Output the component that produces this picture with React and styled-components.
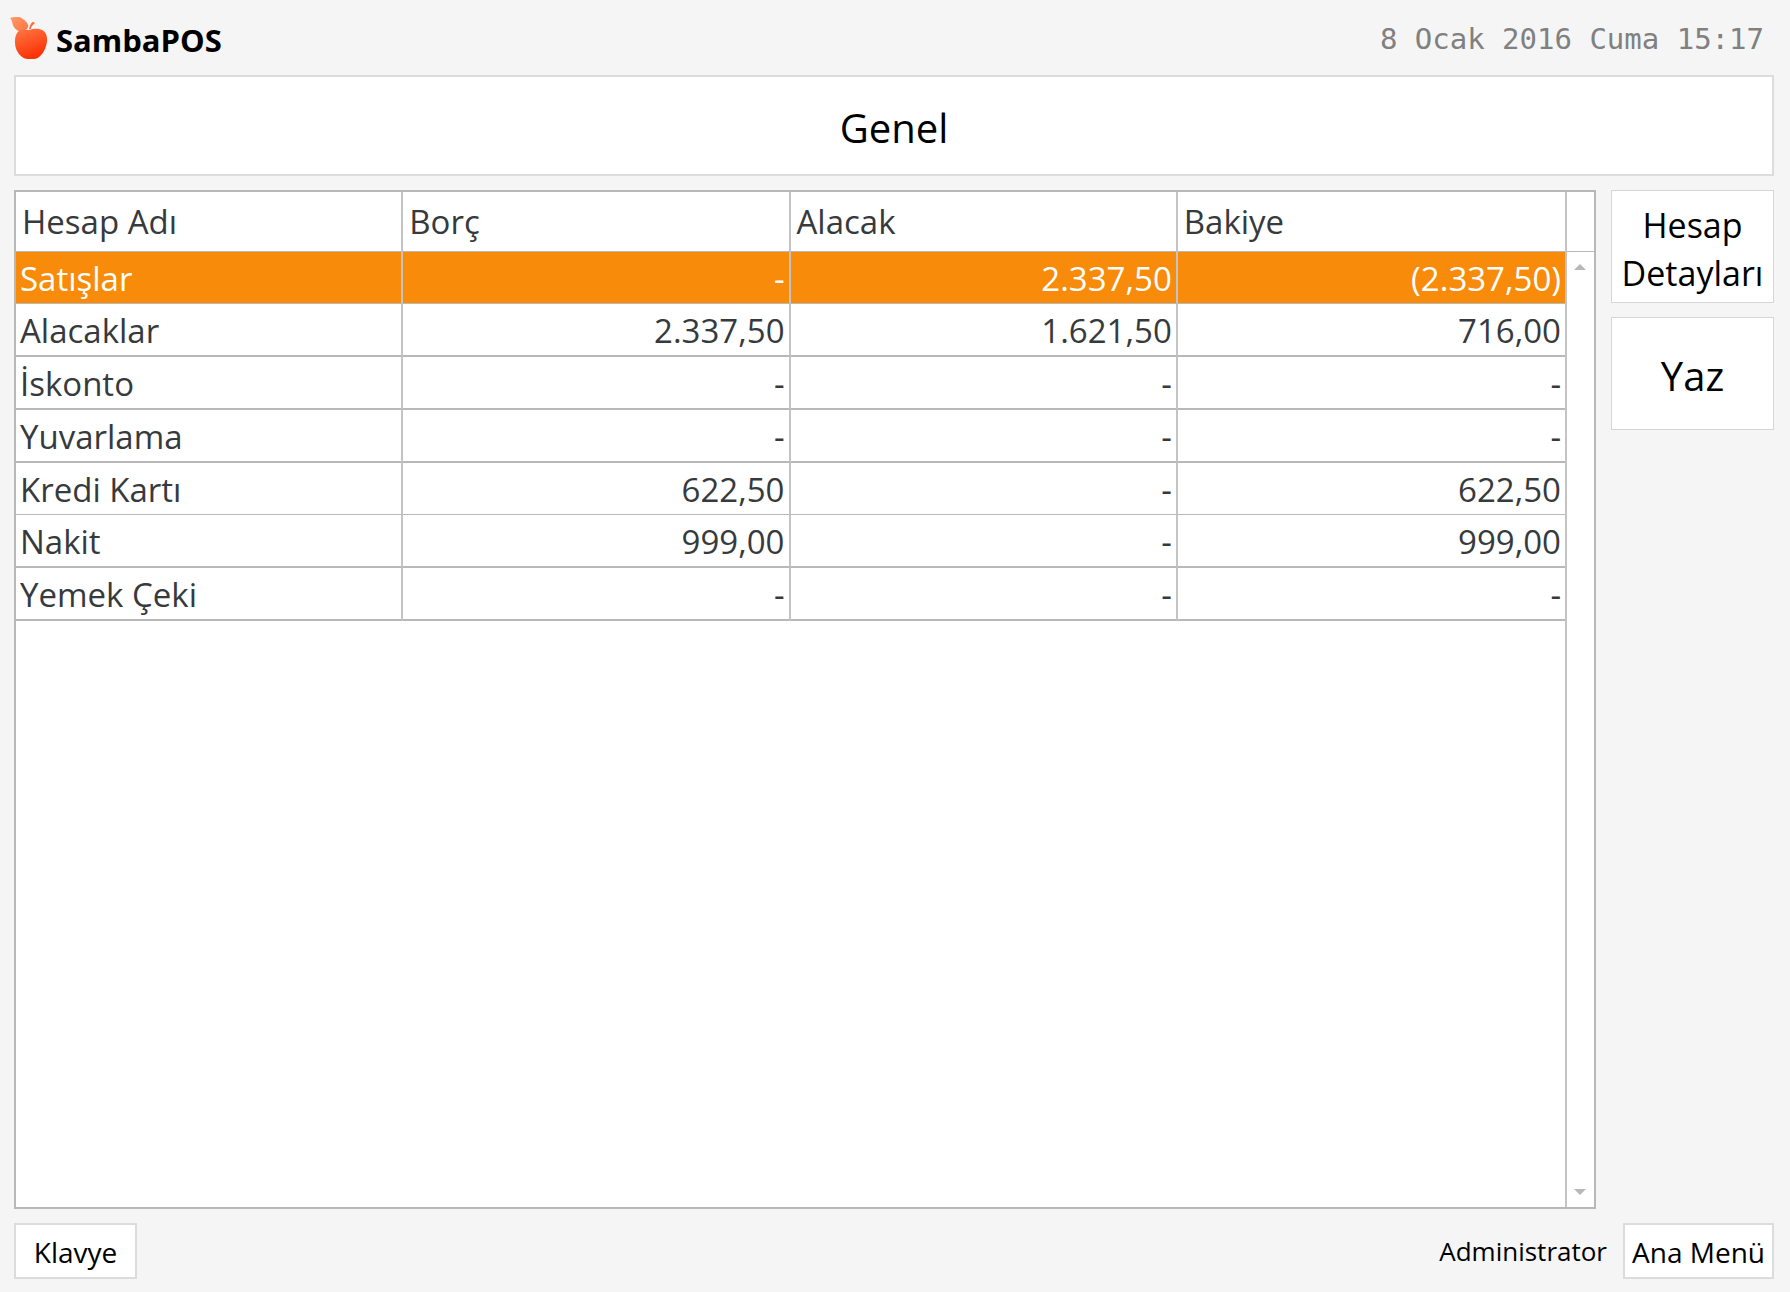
import React from 'react'
import styled, { createGlobalStyle } from 'styled-components'

const GlobalStyle = createGlobalStyle`
    * {
        box-sizing: border-box;
    }
    body {
        margin: 0;
        background: #f5f5f5;
        color: #000;
        font-family: 'Open Sans', 'Noto Sans', sans-serif;
    }
    button {
        font-family: inherit;
        color: inherit;
        cursor: pointer;
    }
`

const Page = styled.div`
    display: flex;
    flex-direction: column;
    min-height: 100vh;
    padding: 0 16px 13px 14px;
`

const Header = styled.header`
    display: flex;
    align-items: center;
    justify-content: space-between;
    height: 75px;
    padding-right: 10px;
`

const Brand = styled.div`
    display: flex;
    align-items: center;
    gap: 7px;
    margin-left: -5px;
    font-size: 31px;
    line-height: 44px;
    font-weight: 700;

    span {
        padding-top: 4px;
    }
`

const Clock = styled.time`
    padding-top: 2px;
    color: #808080;
    font-family: 'DejaVu Sans Mono', monospace;
    font-size: 29px;
    line-height: 36px;
`

const Title = styled.h1`
    display: flex;
    align-items: center;
    justify-content: center;
    height: 101px;
    margin: 0 0 14px;
    padding-top: 4px;
    border: 2px solid #dcdcdc;
    background: #fff;
    font-size: 40px;
    line-height: 56px;
    font-weight: 400;
`

const Main = styled.main`
    display: flex;
    flex: 1;
    gap: 15px;
`

const GridPanel = styled.section`
    display: flex;
    flex: 1;
    align-items: stretch;
    border: 2px solid #b8b8b8;
    background: #fff;
`

const TableArea = styled.div`
    flex: 1;
`

const Table = styled.table`
    width: 100%;
    table-layout: fixed;
    border-collapse: separate;
    border-spacing: 0;
    color: #373a3d;
    font-size: 33px;
    line-height: 48px;
`

const HeadCell = styled.th`
    height: 60px;
    padding: 1px 6px 0;
    border-right: 2px solid #c4c4c4;
    border-bottom: 1px solid #b8b8b8;
    font-weight: 400;
    text-align: left;

    &:last-child {
        border-right: 0;
    }
`

const Row = styled.tr`
    background: ${({ $selected }) => $selected ? '#f88b0a' : '#fff'};
    color: ${({ $selected }) => $selected ? '#fff' : 'inherit'};

    td {
        height: ${({ $thin }) => $thin ? '52px' : '53px'};
        border-bottom: ${({ $thin }) => $thin ? '1px' : '2px'} solid #b8b8b8;
    }
`

const Cell = styled.td`
    padding: 2px 4px 0;
    border-right: 2px solid #c4c4c4;
    text-align: ${({ $align }) => $align || 'left'};

    &:last-child {
        border-right: 0;
    }
`

const ScrollBar = styled.div`
    display: flex;
    flex-direction: column;
    justify-content: space-between;
    width: 29px;
    border-left: 2px solid #c4c4c4;
`

const ScrollTop = styled.div`
    padding-top: 59px;
`

const ScrollButton = styled.button`
    display: flex;
    align-items: center;
    justify-content: center;
    width: 100%;
    height: 30px;
    padding: 0 2px 0 0;
    border: 0;
    border-top: ${({ $ruled }) => $ruled ? '1px solid #b8b8b8' : '0'};
    background: #fff;
`

const Side = styled.aside`
    display: flex;
    flex-direction: column;
    gap: 14px;
    width: 163px;
`

const Button = styled.button`
    border: 1px solid #d6d6d6;
    border-radius: 0;
    background: #fff;
`

const SideButton = styled(Button)`
    height: 113px;
    padding: 4px 0 0;
    font-size: ${({ $large }) => $large ? '40px' : '34px'};
    line-height: 48px;
`

const Footer = styled.footer`
    display: flex;
    align-items: center;
    justify-content: space-between;
    margin-top: 14px;
`

const UserArea = styled.div`
    display: flex;
    align-items: center;
    gap: 16px;
    font-size: 26px;
    line-height: 36px;
`

const FooterButton = styled(Button)`
    width: ${({ $wide }) => $wide ? '151px' : '123px'};
    height: 56px;
    padding: 2px 0 0;
    border-width: 2px;
    border-color: #dcdcdc;
    font-size: 28px;
    line-height: 36px;
    white-space: nowrap;
`

const columns = ['Hesap Adı', 'Borç', 'Alacak', 'Bakiye']

const accounts = [
    { name: 'Satışlar', values: ['-', '2.337,50', '(2.337,50)'], selected: true, thin: true },
    { name: 'Alacaklar', values: ['2.337,50', '1.621,50', '716,00'] },
    { name: 'İskonto', values: ['-', '-', '-'] },
    { name: 'Yuvarlama', values: ['-', '-', '-'] },
    { name: 'Kredi Kartı', values: ['622,50', '-', '622,50'], thin: true },
    { name: 'Nakit', values: ['999,00', '-', '999,00'] },
    { name: 'Yemek Çeki', values: ['-', '-', '-'] },
]

const Apple = () => (
    <svg width='40' height='44' viewBox='27 45 120 132' aria-hidden='true'>
        <defs>
            <linearGradient id='body' x1='0' y1='0' x2='0.4' y2='1'>
                <stop offset='0' stopColor='#ff7a45' />
                <stop offset='1' stopColor='#fb3206' />
            </linearGradient>
            <linearGradient id='leaf' x1='0' y1='0' x2='1' y2='1'>
                <stop offset='0' stopColor='#ff9a6a' />
                <stop offset='1' stopColor='#ff7440' />
            </linearGradient>
        </defs>
        <path fill='url(#leaf)' d='M30 51C40 47 50 47 60 49C74 56 84 66 85 76L81 84C74 86 67 91 63 93C50 89 41 82 38 70C36 61 35 56 30 51Z' />
        <path fill='#ff6a38' d='M87 85C89 74 93 66 98 62L105 66C99 70 93 77 92 85Z' />
        <path fill='url(#body)' d='M88 87C98 83 115 81 126 87C138 93 142 105 141 120C139 142 128 162 113 171C106 175 99 174 93 174C86 174 78 175 71 171C56 162 46 146 45 126C44 106 50 90 64 86C72 84 80 86 88 87Z' />
    </svg>
)

const Arrow = ({ down }) => (
    <svg width='12' height='6' viewBox='0 0 12 6' aria-hidden='true'>
        <path fill='#b8b8b8' d={down ? 'M0 0H12L6 6Z' : 'M0 6H12L6 0Z'} />
    </svg>
)

const AccountTable = () => (
    <Table>
        <thead>
            <tr>
                {columns.map(column => <HeadCell key={column} scope='col'>{column}</HeadCell>)}
            </tr>
        </thead>
        <tbody>
            {accounts.map(({ name, values, selected, thin }) => (
                <Row key={name} $selected={selected} $thin={thin}>
                    <Cell>{name}</Cell>
                    {values.map((value, i) => <Cell key={i} $align='right'>{value}</Cell>)}
                </Row>
            ))}
        </tbody>
    </Table>
)

const App = () => {
    return(
        <Page>
            <GlobalStyle />
            <Header>
                <Brand>
                    <Apple />
                    <span>SambaPOS</span>
                </Brand>
                <Clock dateTime='2016-01-08T15:17'>8 Ocak 2016 Cuma 15:17</Clock>
            </Header>
            <Title>Genel</Title>
            <Main>
                <GridPanel>
                    <TableArea>
                        <AccountTable />
                    </TableArea>
                    <ScrollBar>
                        <ScrollTop>
                            <ScrollButton $ruled aria-label='Yukarı'><Arrow /></ScrollButton>
                        </ScrollTop>
                        <ScrollButton aria-label='Aşağı'><Arrow down /></ScrollButton>
                    </ScrollBar>
                </GridPanel>
                <Side>
                    <SideButton>Hesap Detayları</SideButton>
                    <SideButton $large>Yaz</SideButton>
                </Side>
            </Main>
            <Footer>
                <FooterButton>Klavye</FooterButton>
                <UserArea>
                    <span>Administrator</span>
                    <FooterButton $wide>Ana Menü</FooterButton>
                </UserArea>
            </Footer>
        </Page>
    )
}

export default App
